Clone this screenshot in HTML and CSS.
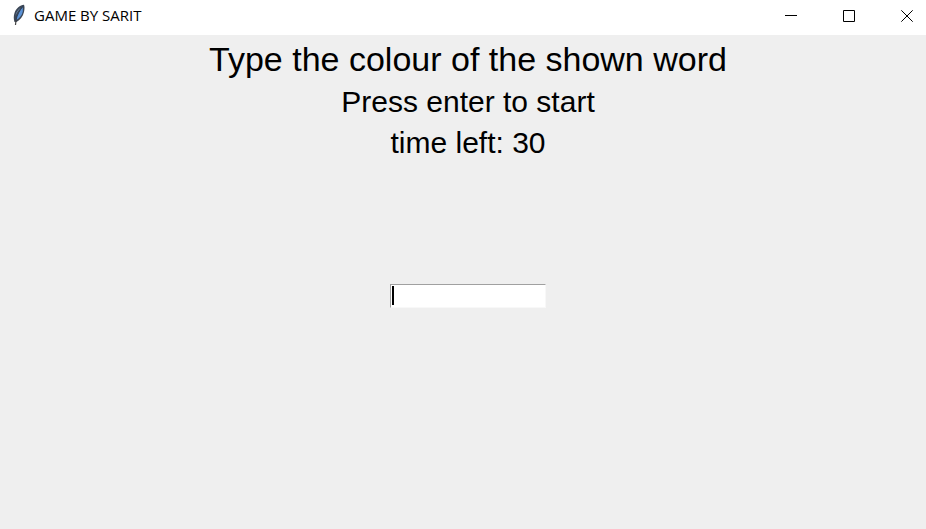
FILE: index.html
```html
<!DOCTYPE html>
<html lang="en">
<head>
<meta charset="utf-8">
<title>GAME BY SARIT</title>
<link rel="stylesheet" href="styles.css">
</head>
<body>
<header class="titlebar">
  <svg class="feather" viewBox="0 0 14 22" aria-hidden="true">
    <path d="M12 .8C8 1 4 4.500 2.500 9C1.500 12 1.500 15 2.500 18L4.500 18C8 16 11 12.500 12 8C12.700 5 12.700 2.500 12 .8Z" fill="#3b4656"/>
    <path d="M10.800 3C8 6 5 10.500 4.300 16C7.500 14.300 10 11.500 10.800 7.500Z" fill="#5b92d6"/>
    <path d="M9 3.500C6 5.500 4 8.500 3.500 12C4.500 9 6.500 6 9 3.500Z" fill="#8aa9cf"/>
    <path d="M10.800 2.500C7.500 6.500 5 11 3.800 17" fill="none" stroke="#26364e" stroke-width=".8"/>
    <path d="M4 16L3.500 21" fill="none" stroke="#444" stroke-width="1.200"/>
  </svg>
  <span class="title">GAME BY SARIT</span>
  <div class="controls">
    <button class="control" type="button" aria-label="Minimize"><svg viewBox="0 0 12 12"><path d="M0 5.500H12"/></svg></button>
    <button class="control" type="button" aria-label="Maximize"><svg viewBox="0 0 12 12"><path d="M.5.500H11.500V11.500H.5Z"/></svg></button>
    <button class="control" type="button" aria-label="Close"><svg viewBox="0 0 12 12"><path d="M.3.300L11.700 11.700M11.700.300L.3 11.700"/></svg></button>
  </div>
</header>
<main class="game">
  <h1 class="heading">Type the colour of the shown word</h1>
  <p class="line">Press enter to start</p>
  <p class="line">time left: 30</p>
  <div class="entry">
    <input class="field" type="text" aria-label="Colour">
    <span class="caret"></span>
  </div>
</main>
</body>
</html>
```
FILE: styles.css
```css
* {
  box-sizing: border-box;
}

body {
  margin: 0;
  min-height: 100vh;
  display: flex;
  flex-direction: column;
  overflow-x: hidden;
  background: #efefef;
  color: #000;
  font-family: "Liberation Sans", Arial, sans-serif;
}

.titlebar {
  display: flex;
  align-items: center;
  height: 35px;
  padding-left: 12px;
  background: #fff;
}

.feather {
  width: 14px;
  height: 22px;
  margin-right: 8px;
  margin-bottom: 6px;
}

.title {
  font: 15px/20px "Open Sans", "Noto Sans", sans-serif;
  margin-bottom: 5px;
}

.controls {
  display: flex;
  height: 100%;
  margin-left: auto;
  margin-right: -10px;
}

.control {
  display: flex;
  align-items: center;
  justify-content: center;
  width: 58px;
  padding: 0 0 3px;
  border: 0;
  background: none;
}

.control svg {
  width: 12px;
  height: 12px;
  fill: none;
  stroke: #000;
  stroke-width: 1;
}

.game {
  display: flex;
  flex-direction: column;
  align-items: center;
  padding: 3px 0 0 10px;
}

.heading {
  margin: 0;
  font-size: 34px;
  line-height: 43px;
  font-weight: 400;
}

.line {
  margin: 0;
  font-size: 30px;
  line-height: 41px;
}

.entry {
  position: relative;
  margin-top: 121px;
}

.field {
  display: block;
  width: 156px;
  height: 24px;
  padding: 0 4px;
  border: 1px solid #f8f8f8;
  border-top-color: #a0a0a0;
  border-left-color: #a0a0a0;
  background: #fff;
  font: 16px "Liberation Sans", sans-serif;
  outline: 0;
}

.caret {
  position: absolute;
  top: 2px;
  left: 2px;
  width: 2px;
  height: 19px;
  background: #000;
}
```
